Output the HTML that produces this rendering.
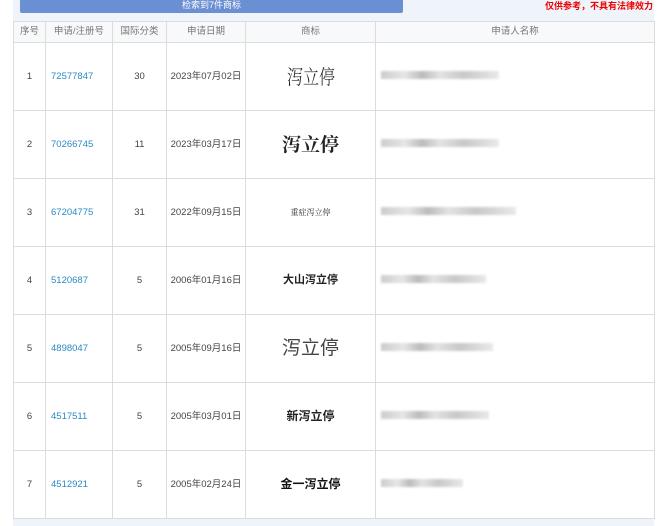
<!DOCTYPE html>
<html><head><meta charset="utf-8"><style>
body{margin:0;width:660px;height:526px;background:#fff;font-family:"Liberation Sans","Noto Sans CJK SC",sans-serif;position:relative;overflow:hidden}
.panel{position:absolute;left:13px;top:0;width:641px;height:526px;background:#eef4f9}
.btn{position:absolute;left:20px;top:0;width:383px;height:13px;background:#6b8fd3;border-radius:0 0 2px 2px;color:#fff;font-size:9px;line-height:10px;text-align:center}
.warn{position:absolute;right:7px;top:-1px;color:#e00;font-size:9px;font-weight:bold}
table{position:absolute;left:13px;top:21px;width:641px;table-layout:fixed;border-collapse:collapse;background:#fff;font-size:9.5px;color:#444}
td,th{border:1px solid #dcdcdc;padding:0;text-align:center;white-space:nowrap;line-height:12px}
th{height:20px;font-weight:normal;color:#777;background:#f7f9fb}
td{height:67px}
td.n{color:#2a8ac4;text-align:left;padding-left:5px}
.blur{display:inline-block;height:8px;background:linear-gradient(90deg,#ccc,#e6e6e6 20%,#bbb 35%,#e3e3e3 50%,#c8c8c8 70%,#e9e9e9);filter:blur(1px)}
td.a{text-align:left;padding-left:5px}
.m{font-family:"Noto Serif CJK SC",serif;color:#222}
td span{line-height:1}
</style></head><body>
<div class="panel"></div>
<div class="btn">检索到7件商标</div>
<div class="warn">仅供参考，不具有法律效力</div>
<table>
<colgroup><col style="width:32px"><col style="width:67px"><col style="width:54px"><col style="width:79px"><col style="width:130px"><col style="width:279px"></colgroup>
<tr><th>序号</th><th>申请/注册号</th><th>国际分类</th><th>申请日期</th><th>商标</th><th>申请人名称</th></tr>
<tr><td>1</td><td class="n">72577847</td><td>30</td><td>2023年07月02日</td><td><span class="m" style="font-size:20px;font-weight:300;transform:scaleX(.8);display:inline-block">泻立停</span></td><td class="a"><span class="blur" style="width:118px"></span></td></tr>
<tr><td>2</td><td class="n">70266745</td><td>11</td><td>2023年03月17日</td><td><span class="m" style="font-size:19px;font-weight:bold">泻立停</span></td><td class="a"><span class="blur" style="width:118px"></span></td></tr>
<tr><td>3</td><td class="n">67204775</td><td>31</td><td>2022年09月15日</td><td><span class="m" style="font-size:8px">重症泻立停</span></td><td class="a"><span class="blur" style="width:135px"></span></td></tr>
<tr><td>4</td><td class="n">5120687</td><td>5</td><td>2006年01月16日</td><td><span style="font-size:11px;font-weight:bold;color:#222">大山泻立停</span></td><td class="a"><span class="blur" style="width:105px"></span></td></tr>
<tr><td>5</td><td class="n">4898047</td><td>5</td><td>2005年09月16日</td><td><span style="font-size:19px;color:#444">泻立停</span></td><td class="a"><span class="blur" style="width:112px"></span></td></tr>
<tr><td>6</td><td class="n">4517511</td><td>5</td><td>2005年03月01日</td><td><span style="font-size:12px;font-weight:bold;color:#222">新泻立停</span></td><td class="a"><span class="blur" style="width:108px"></span></td></tr>
<tr><td>7</td><td class="n">4512921</td><td>5</td><td>2005年02月24日</td><td><span style="font-size:12px;font-weight:bold;color:#111">金一泻立停</span></td><td class="a"><span class="blur" style="width:82px"></span></td></tr>
</table>
</body></html>
